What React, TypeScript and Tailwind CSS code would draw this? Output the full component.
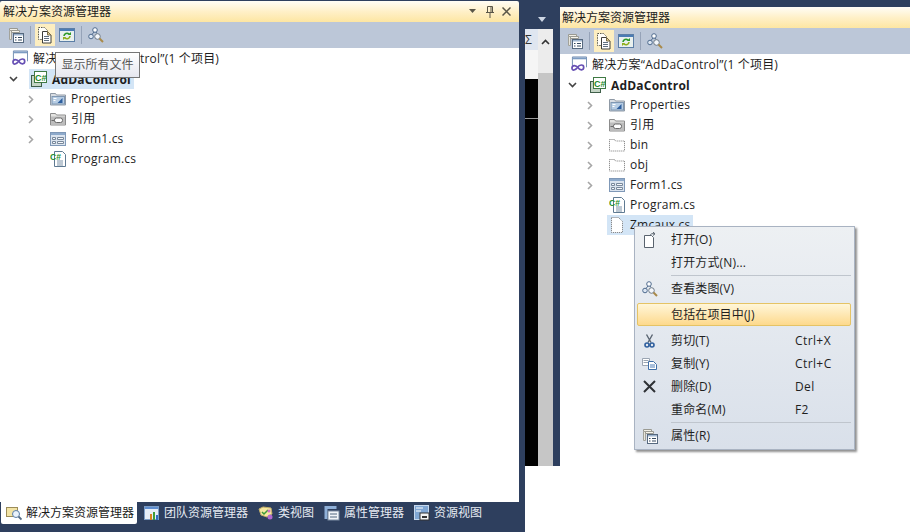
import type { ReactNode } from "react";

const font = "font-['Open_Sans','Noto_Sans_CJK_SC',sans-serif]";

function PropsIcon() {
	return (
		<svg width="16" height="16" viewBox="0 0 16 16">
			<path d="M1.500 1.500h8v2h-8z" fill="#f1efe6" stroke="#9a9a92" />
			<path d="M1.500 3.500h2v9h-2z" fill="#e8e6dc" stroke="#a2a29a" />
			<path d="M3.500 3.500h8v2h-8z" fill="#f7f5ec" stroke="#9a9a92" />
			<rect x="5.500" y="6.500" width="10" height="9" fill="#fff" stroke="#56697f" />
			<rect x="6" y="7" width="9" height="1.500" fill="#9fb6cf" />
			<path d="M7 10.500h1.500M10 10.500h4M7 13h1.500M10 13h4" stroke="#34495f" />
		</svg>
	);
}

function ShowAllIcon() {
	return (
		<svg width="16" height="18" viewBox="0 0 16 18">
			<path d="M1.500 1.500h6l3 3v9h-9z" fill="#fffef8" stroke="#5a5a50" strokeDasharray="1.500 1" />
			<path d="M5.500 5.500h5l3.500 3.500v8h-8.500z" fill="#fff" stroke="#3e3e3a" />
			<path d="M10.500 5.500v3.500h3.500z" fill="#e5cf92" stroke="#7a6c48" />
			<path d="M7 10.500h5M7 12.500h5M7 14.500h5" stroke="#5f6f80" />
		</svg>
	);
}

function RefreshIcon() {
	return (
		<svg width="16" height="16" viewBox="0 0 16 16">
			<rect x="0.500" y="1.500" width="15" height="13" fill="#e9f0ee" stroke="#5c7ea6" />
			<rect x="1" y="2" width="14" height="2" fill="#4a7bb5" />
			<path d="M5 9a3 3 0 0 1 5-2" fill="none" stroke="#2e9a2c" strokeWidth="1.600" />
			<path d="M11 9a3 3 0 0 1-5 2" fill="none" stroke="#8fae1c" strokeWidth="1.600" />
			<path d="M8.500 8h3.500V5z" fill="#2e9a2c" />
			<path d="M7.500 10H4v3z" fill="#8fae1c" />
		</svg>
	);
}

function ClassViewIcon() {
	return (
		<svg width="16" height="16" viewBox="0 0 16 16">
			<circle cx="7" cy="3" r="2.300" fill="#fff" stroke="#4f6b8e" />
			<circle cx="3" cy="9.500" r="2.300" fill="#dce6f2" stroke="#4f6b8e" />
			<path d="M6 5L4 7.500M8 5l1 1.500" stroke="#4f6b8e" />
			<circle cx="9.500" cy="9.500" r="2.800" fill="#f4f7fb" stroke="#6d7a88" />
			<path d="M11.500 11.500l3.500 3.500" stroke="#a98a4a" strokeWidth="2" />
		</svg>
	);
}

function SolutionIcon() {
	return (
		<svg width="17" height="16" viewBox="0 0 17 16">
			<path d="M1.500 10V.500h15v11" fill="#fff" stroke="#6f8cb0" />
			<rect x="2" y="1" width="14" height="2" fill="#7d9cc2" />
			<path d="M1 12.500c0-4 4.500-3.500 6.500-.500s6 3 6-.500-4.500-3-6.500 0-6 4.500-6 .500z" fill="#fff" stroke="#6750b4" strokeWidth="1.800" />
		</svg>
	);
}

function ProjectIcon() {
	return (
		<svg width="16" height="16" viewBox="0 0 16 16">
			<rect x="0.500" y="4.500" width="10" height="11" fill="#c5d5c6" stroke="#3f5f4a" />
			<rect x="3.500" y="0.500" width="12" height="11" fill="#fff" stroke="#3f7a44" />
			<text x="4" y="9.500" fontSize="9" fontWeight="700" fill="#238a2a" fontFamily="Liberation Sans, sans-serif">C#</text>
		</svg>
	);
}

function PropertiesFolderIcon() {
	return (
		<svg width="16" height="14" viewBox="0 0 16 14">
			<path d="M0.500 1.500h5l1 1.500h9v10H.500z" fill="#d8dde3" stroke="#8f99a5" />
			<rect x="2" y="4.500" width="12.500" height="7.500" fill="#b7cde4" stroke="#7f97b2" />
			<path d="M7.500 11l5-5v5z" fill="#2e5f9e" />
			<path d="M3.500 6.500h3M3.500 8.500h2" stroke="#fff" />
		</svg>
	);
}

function RefFolderIcon() {
	return (
		<svg width="16" height="14" viewBox="0 0 16 14">
			<path d="M0.500 1.500h5l1 1.500h9v10H.500z" fill="#e3e3e1" stroke="#8c8c8c" />
			<path d="M1 4.500h14v8H1z" fill="#bdbdbd" />
			<rect x="4.500" y="6" width="8" height="4.500" rx="2" fill="#fff" stroke="#6a6a6a" />
			<path d="M1.500 8.500h3" stroke="#6a6a6a" />
		</svg>
	);
}

function FormIcon() {
	return (
		<svg width="16" height="16" viewBox="0 0 16 16">
			<rect x="0.500" y="1.500" width="15" height="13" fill="#dbe4ef" stroke="#7f98b7" />
			<rect x="1" y="2" width="14" height="2" fill="#8eaacb" />
			<path d="M2.500 6.500h3v2h-3zM2.500 10.500h3v2h-3zM7.500 6.500h6v2h-6zM7.500 10.500h6v2h-6z" fill="#f5f7fa" stroke="#78889b" />
		</svg>
	);
}

function CsFileIcon() {
	return (
		<svg width="16" height="16" viewBox="0 0 16 16">
			<path d="M4.500 0.500h8l3 3v12h-11z" fill="#fff" stroke="#5f7a92" />
			<path d="M7 10h6M7 12h6M7 14h6" stroke="#7d93a8" />
			<text x="0" y="8.500" fontSize="8.500" fontWeight="700" fill="#1f8f2a" fontFamily="Liberation Sans, sans-serif">C#</text>
		</svg>
	);
}

function DashedFolderIcon() {
	return (
		<svg width="16" height="14" viewBox="0 0 16 14">
			<path d="M0.500 1.500h5l1 1.500h9v10H.500z" fill="#fff" stroke="#777" strokeDasharray="1 1" />
		</svg>
	);
}

function DashedFileIcon() {
	return (
		<svg width="16" height="16" viewBox="0 0 16 16">
			<path d="M2.500 0.500h7l4 4v11h-11z" fill="#fff" stroke="#777" strokeDasharray="1 1" />
		</svg>
	);
}

function Chevron({ open }: { open?: boolean }) {
	return open ? (
		<svg width="9" height="6" viewBox="0 0 9 6">
			<path d="M1 1l3.500 3.500L8 1" fill="none" stroke="#444" strokeWidth="1.600" />
		</svg>
	) : (
		<svg width="6" height="9" viewBox="0 0 6 9">
			<path d="M1 1l3.500 3.500L1 8" fill="none" stroke="#a6a6a6" strokeWidth="1.600" />
		</svg>
	);
}

type Row = {
	depth: 0 | 1 | 2;
	icon: ReactNode;
	label: string;
	expand?: "open" | "closed";
	bold?: boolean;
	selected?: boolean;
	right?: boolean;
	low?: boolean;
};

const leftPad = { 0: "pl-[12px]", 1: "pl-[9px]", 2: "pl-[28px]" };
const rightPad = { 0: "pl-[11px]", 1: "pl-[8px]", 2: "pl-[27px]" };

function TreeRow({ depth, icon, label, expand, bold, selected, right, low }: Row) {
	const pad = right ? rightPad[depth] : leftPad[depth];
	return (
		<div className={`flex h-5 items-center ${pad}`}>
			{depth > 0 && (
				<div className="flex w-[22px] shrink-0 items-center">
					{expand && <Chevron open={expand === "open"} />}
				</div>
			)}
			<div
				className={`flex h-5 items-center gap-[5px] pr-[3px] ${selected ? "-ml-[2px] bg-[#d3e5f6] pl-[2px]" : ""}`}
			>
				<div className="flex w-4 shrink-0 justify-center">{icon}</div>
				<span
					className={`whitespace-nowrap text-[12px] tracking-[0.2px] text-[#1e1e1e] ${bold ? "font-bold" : ""} ${low ? "mt-[2px]" : ""}`}
				>
					{label}
				</span>
			</div>
		</div>
	);
}

function TitleBar({ buttons, right }: { buttons?: boolean; right?: boolean }) {
	return (
		<div
			className={`flex h-[21px] items-center justify-between rounded-t-[2px] bg-gradient-to-b from-[#fffdf6] via-[#fff0c8] to-[#fde6a2] ${right ? "pl-[2px]" : "pl-[3px]"}`}
		>
			<span className="text-[12px] text-[#1b1b1b]">解决方案资源管理器</span>
			{buttons && (
				<div className="flex items-center pr-[8px]">
					<svg width="8" height="5" viewBox="0 0 8 5" className="mr-[9px]">
						<path d="M0 0h7L3.500 4z" fill="#5a5648" />
					</svg>
					<svg width="8" height="12" viewBox="0 0 8 12" className="mr-[8px]">
						<path d="M1.500 .500h5v6h-5zM0 6.500h8M4 7v5M5 1v5" fill="none" stroke="#5a5648" />
					</svg>
					<svg width="9" height="9" viewBox="0 0 9 9">
						<path d="M.500 .500l8 8M8.500 .500l-8 8" stroke="#5a5648" strokeWidth="1.500" />
					</svg>
				</div>
			)}
		</div>
	);
}

function Toolbar({ right }: { right?: boolean }) {
	return (
		<div className={`flex h-[26px] items-center bg-[#bcc7d8] ${right ? "pl-[7px]" : "pl-[8px]"}`}>
			<PropsIcon />
			<div className="ml-[6px] h-[18px] w-px bg-[#96a3b8]" />
			<div className="ml-[4px] flex h-[22px] w-[20px] items-center justify-center bg-[#fdeec0]">
				<ShowAllIcon />
			</div>
			<div className="ml-[4px]">
				<RefreshIcon />
			</div>
			<div className="ml-[6px] h-[18px] w-px bg-[#96a3b8]" />
			<div className="ml-[6px]">
				<ClassViewIcon />
			</div>
		</div>
	);
}

const tabs: { label: string; icon: ReactNode }[] = [
	{
		label: "团队资源管理器",
		icon: (
			<svg width="16" height="16" viewBox="0 0 16 16">
				<rect x="0.500" y="1.500" width="14" height="13" fill="#e6eef8" stroke="#7b9cc6" />
				<rect x="1" y="2" width="13" height="2" fill="#5f8ed0" />
				<rect x="6" y="9" width="2" height="6" fill="#d8821e" />
				<rect x="9" y="7" width="2" height="8" fill="#3d9c3a" />
				<rect x="12" y="10" width="2" height="5" fill="#2f6fc4" />
			</svg>
		),
	},
	{
		label: "类视图",
		icon: (
			<svg width="16" height="16" viewBox="0 0 16 16">
				<path d="M1 4l4-2 8 1 1 6-5 3-6-2z" fill="#f6e7a0" stroke="#c4b06a" />
				<path d="M4 7l2 2 4-4" fill="none" stroke="#3c9a3a" strokeWidth="1.500" />
				<circle cx="12" cy="12" r="2.500" fill="#b06ad0" />
				<circle cx="11" cy="6" r="1.500" fill="#d070c8" />
			</svg>
		),
	},
	{
		label: "属性管理器",
		icon: (
			<svg width="16" height="16" viewBox="0 0 16 16">
				<path d="M0.500 1h12v3h-9v10h-3z" fill="#8fb0d8" />
				<rect x="4" y="6" width="11" height="9" fill="#f2f5f9" stroke="#7d8ea3" />
				<path d="M6 9h7M6 12h7" stroke="#51667e" />
			</svg>
		),
	},
	{
		label: "资源视图",
		icon: (
			<svg width="16" height="16" viewBox="0 0 16 16">
				<rect x="0.500" y="0.500" width="14" height="14" fill="#7fa6d4" stroke="#c6d8ee" />
				<path d="M2 3h7M2 6h5" stroke="#fff" />
				<rect x="6" y="8" width="9" height="7" fill="#f4f4f4" stroke="#333" />
				<rect x="8" y="11" width="5" height="2" fill="#333" />
			</svg>
		),
	},
];

const tabGap = ["ml-[7px]", "ml-[10px]", "ml-[10px]", "ml-[10px]"];

function TabStrip() {
	return (
		<div className="flex h-[30px] items-start bg-[#2e3f5e] pl-px">
			<div className="flex h-[22px] w-[136px] items-center gap-[4px] rounded-b-[2px] bg-white pl-[5px]">
				<svg width="16" height="16" viewBox="0 0 16 16" className="shrink-0">
					<rect x="0.500" y="2.500" width="11" height="9" fill="#f2e3a4" stroke="#9c8c58" />
					<circle cx="10" cy="9" r="3.500" fill="#eaf2fb" stroke="#5b7ea8" />
					<path d="M12.500 11.500l3 3" stroke="#546a84" strokeWidth="1.800" />
				</svg>
				<span className="whitespace-nowrap text-[12px] text-[#1b1b1b]">解决方案资源管理器</span>
			</div>
			{tabs.map((tab, i) => (
				<div key={tab.label} className={`flex h-[22px] items-center gap-[4px] ${tabGap[i]}`}>
					{tab.icon}
					<span className="whitespace-nowrap text-[12px] text-[#e6ebf3]">{tab.label}</span>
				</div>
			))}
		</div>
	);
}

function CutIcon() {
	return (
		<svg width="11" height="14" viewBox="0 0 11 14">
			<path d="M2.500 .500l4.500 8M8.500 .500L4 8.500" stroke="#5a6572" strokeWidth="1.400" />
			<circle cx="3" cy="11" r="2" fill="none" stroke="#2f5f9e" strokeWidth="1.600" />
			<circle cx="8" cy="11" r="2" fill="none" stroke="#2f5f9e" strokeWidth="1.600" />
		</svg>
	);
}

function CopyIcon() {
	return (
		<svg width="15" height="12" viewBox="0 0 15 12">
			<path d="M.500 .500h7v7h-7z" fill="#fff" stroke="#9aa5b2" />
			<path d="M1.500 2.500h5M1.500 4.500h5" stroke="#9aa5b2" />
			<path d="M6.500 3.500h5l3 3v5h-8z" fill="#fff" stroke="#3f6fa8" />
			<path d="M8 7h5M8 9h5" stroke="#4e7fb8" />
		</svg>
	);
}

function DeleteIcon() {
	return (
		<svg width="13" height="13" viewBox="0 0 13 13">
			<path d="M1 1l11 11M12 1L1 12" stroke="#2e3135" strokeWidth="2" />
		</svg>
	);
}

function OpenIcon() {
	return (
		<svg width="14" height="16" viewBox="0 0 14 16">
			<path d="M1.500 3.500h7l2 2v10h-9z" fill="#fff" stroke="#59636e" />
			<path d="M7 4c0-2 2.500-3 4.500-2M10 0l2 1.800L10 3.500" fill="none" stroke="#59636e" />
		</svg>
	);
}

type MenuItem = {
	label?: string;
	key?: string;
	icon?: ReactNode;
	active?: boolean;
	sep?: boolean;
	tall?: boolean;
};

const menuItems: MenuItem[] = [
	{ label: "打开(O)", icon: <OpenIcon /> },
	{ label: "打开方式(N)..." },
	{ sep: true },
	{ label: "查看类图(V)", icon: <ClassViewIcon /> },
	{ label: "包括在项目中(J)", active: true },
	{ label: "剪切(T)", key: "Ctrl+X", icon: <CutIcon />, tall: true },
	{ label: "复制(Y)", key: "Ctrl+C", icon: <CopyIcon /> },
	{ label: "删除(D)", key: "Del", icon: <DeleteIcon /> },
	{ label: "重命名(M)", key: "F2" },
	{ sep: true },
	{ label: "属性(R)", icon: <PropsIcon /> },
];

function ContextMenu() {
	return (
		<div className="absolute left-[634px] top-[226px] w-[221px] border border-[#a9b3c2] bg-gradient-to-b from-[#edf0f3] to-[#d9e0ea] pb-[2px] pl-[2px] pr-[3px] pt-px shadow-[2px_2px_2px_rgba(70,70,70,0.6)]">
			{menuItems.map((item, i) =>
				item.sep ? (
					<div key={i} className="my-[1px] ml-[34px] h-px bg-[#bfc5cd]" />
				) : (
					<div
						key={i}
						className={`flex h-[23px] items-center text-[12px] text-[#1f1f1f] ${
							item.active
								? "mt-[3px] rounded-[2px] border border-[#e5c365] bg-gradient-to-b from-[#fff6d8] to-[#fdd98c]"
								: ""
						} ${item.tall ? "mt-[3px]" : ""}`}
					>
						<div className={`flex shrink-0 justify-center ${item.active ? "w-[24px]" : "w-[25px]"}`}>
							{item.icon}
						</div>
						<span className="ml-[9px] w-[124px] whitespace-nowrap tracking-[0.15px]">{item.label}</span>
						<span className="whitespace-nowrap tracking-[0.4px]">{item.key}</span>
					</div>
				),
			)}
		</div>
	);
}

function SidePane() {
	return (
		<div className="flex h-[466px] w-[35px] shrink-0 flex-col bg-[#2e3f5e]">
			<div className="flex h-[29px] items-end justify-center pb-[7px] pr-px">
				<svg width="8" height="5" viewBox="0 0 8 5">
					<path d="M0 0h8L4 5z" fill="#cdd6e4" />
				</svg>
			</div>
			<div className="flex min-h-0 flex-1 pr-[7px]">
				<div className="flex w-[13px] flex-col">
					<div className="flex h-[21px] items-center bg-[#dfe6f0] text-[12px] text-[#333]">Σ</div>
					<div className="h-[29px] bg-[#f5f5f5]" />
					<div className="h-[40px] border-b border-[#999] bg-black" />
					<div className="flex-1 bg-black" />
				</div>
				<div className="flex w-[15px] flex-col">
					<div className="flex h-[44px] items-start justify-center bg-[#ececec] pt-[10px]">
						<svg width="9" height="6" viewBox="0 0 9 6">
							<path d="M1 5l3.500-3.500L8 5" fill="none" stroke="#333" strokeWidth="1.600" />
						</svg>
					</div>
					<div className="flex-1 bg-[#c6c6c6]" />
				</div>
			</div>
		</div>
	);
}

export default function App() {
	return (
		<div className={`relative flex h-[532px] w-[910px] overflow-hidden bg-white ${font}`}>
			{/* left window */}
			<div className="flex w-[525px] shrink-0 flex-col bg-[#2e3f5e] pt-px">
				<div className="flex min-h-0 flex-1 flex-col pr-[6px]">
					<TitleBar buttons />
					<Toolbar />
					<div className="flex-1 bg-white">
						<TreeRow low depth={0} icon={<SolutionIcon />} label="解决方案“AdDaControl”(1 个项目)" />
						<div className="mt-px">
							<TreeRow low depth={1} expand="open" icon={<ProjectIcon />} label="AdDaControl" bold selected />
						</div>
						<TreeRow depth={2} expand="closed" icon={<PropertiesFolderIcon />} label="Properties" />
						<TreeRow depth={2} expand="closed" icon={<RefFolderIcon />} label="引用" />
						<TreeRow depth={2} expand="closed" icon={<FormIcon />} label="Form1.cs" />
						<TreeRow depth={2} icon={<CsFileIcon />} label="Program.cs" />
					</div>
				</div>
				<TabStrip />
			</div>

			{/* tooltip over the left tree */}
			<div className="absolute left-[55px] top-[52px] flex h-[26px] w-[85px] items-center justify-center border border-[#767676] bg-gradient-to-b from-[#ffffff] to-[#e6e7ef] text-[12px] text-[#575757]">
				显示所有文件
			</div>

			{/* right side */}
			<SidePane />
			<div className="flex min-w-0 flex-1 flex-col">
				<div className="h-[7px] shrink-0 bg-[#2e3f5e]" />
				<TitleBar right />
				<Toolbar right />
				<div className="flex-1 bg-white">
					<TreeRow right low depth={0} icon={<SolutionIcon />} label="解决方案“AdDaControl”(1 个项目)" />
					<div className="mt-px">
						<TreeRow right low depth={1} expand="open" icon={<ProjectIcon />} label="AdDaControl" bold />
					</div>
					<TreeRow right depth={2} expand="closed" icon={<PropertiesFolderIcon />} label="Properties" />
					<TreeRow right depth={2} expand="closed" icon={<RefFolderIcon />} label="引用" />
					<TreeRow right depth={2} expand="closed" icon={<DashedFolderIcon />} label="bin" />
					<TreeRow right depth={2} expand="closed" icon={<DashedFolderIcon />} label="obj" />
					<TreeRow right depth={2} expand="closed" icon={<FormIcon />} label="Form1.cs" />
					<TreeRow right depth={2} icon={<CsFileIcon />} label="Program.cs" />
					<TreeRow right depth={2} icon={<DashedFileIcon />} label="Zmcaux.cs" selected />
				</div>
			</div>

			<ContextMenu />
		</div>
	);
}
